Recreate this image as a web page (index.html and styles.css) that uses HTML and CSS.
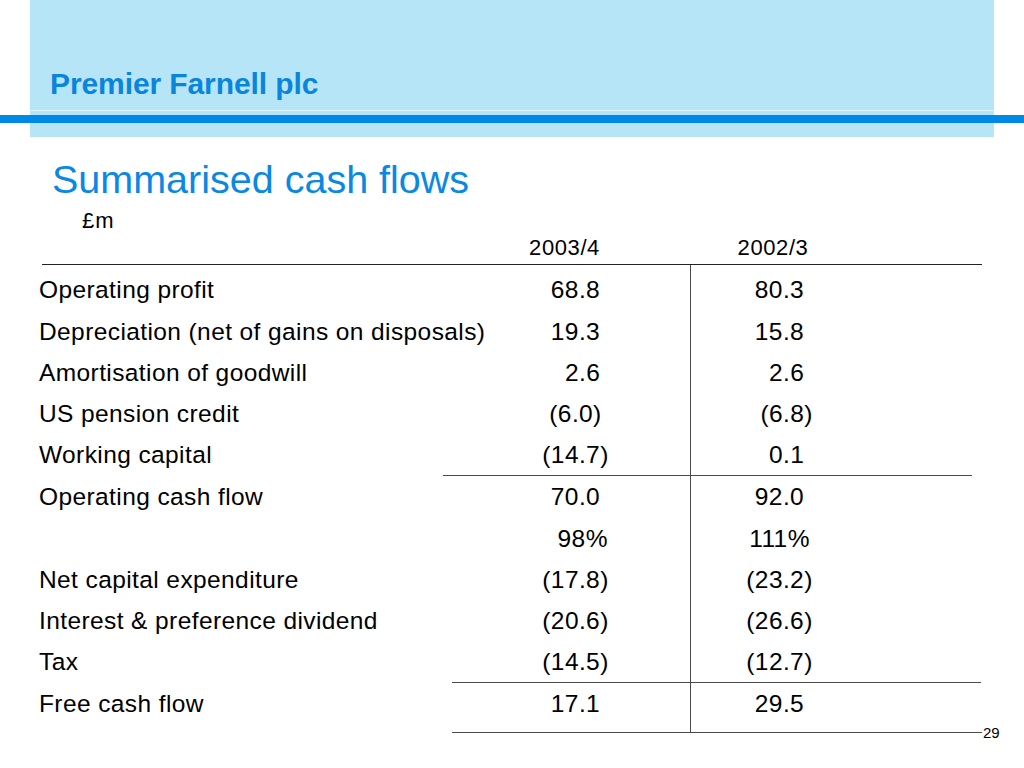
FILE: index.html
```html
<!DOCTYPE html>
<html lang="en">
<head>
<meta charset="utf-8">
<title>Summarised cash flows</title>
<link rel="stylesheet" href="styles.css">
</head>
<body>
<div class="page">
  <header class="header">
    <div class="banner-top">
      <div class="brand">Premier Farnell plc</div>
      <div class="sheen"></div>
    </div>
    <div class="bar"></div>
    <div class="banner-bottom"></div>
  </header>

  <h1 class="title">Summarised cash flows</h1>
  <div class="unit">£m</div>

  <div class="thead">
    <div></div>
    <div class="h1">2003/4</div>
    <div class="h2">2002/3</div>
  </div>

  <div class="tbody">
    <div class="row spacer-top"><div></div><div class="c1"></div><div></div></div>
    <div class="row"><div class="lbl">Operating profit</div><div class="c1">68.8</div><div class="c2">80.3</div></div>
    <div class="row"><div class="lbl">Depreciation (net of gains on disposals)</div><div class="c1">19.3</div><div class="c2">15.8</div></div>
    <div class="row"><div class="lbl">Amortisation of goodwill</div><div class="c1">  2.6</div><div class="c2">  2.6</div></div>
    <div class="row"><div class="lbl">US pension credit</div><div class="c1">(6.0)</div><div class="c2">  (6.8)</div></div>
    <div class="row"><div class="lbl">Working capital</div><div class="c1">(14.7)</div><div class="c2">  0.1</div></div>
    <div class="rule rule-a"></div>
    <div class="row"><div class="lbl">Operating cash flow</div><div class="c1">70.0</div><div class="c2">92.0</div></div>
    <div class="row"><div class="lbl"></div><div class="c1">  98%</div><div class="c2">111%</div></div>
    <div class="row"><div class="lbl">Net capital expenditure</div><div class="c1">(17.8)</div><div class="c2">(23.2)</div></div>
    <div class="row"><div class="lbl">Interest &amp; preference dividend</div><div class="c1">(20.6)</div><div class="c2">(26.6)</div></div>
    <div class="row"><div class="lbl">Tax</div><div class="c1">(14.5)</div><div class="c2">(12.7)</div></div>
    <div class="rule rule-b"></div>
    <div class="row"><div class="lbl">Free cash flow</div><div class="c1">17.1</div><div class="c2">29.5</div></div>
    <div class="row spacer-bottom"><div></div><div class="c1"></div><div></div></div>
    <div class="foot">
      <div class="rule-c"></div>
      <div class="pageno">29</div>
    </div>
  </div>
</div>
</body>
</html>
```

FILE: styles.css
```css
* { box-sizing: border-box; }

html, body {
  margin: 0;
  padding: 0;
  background: #ffffff;
}

.page {
  width: 1024px;
  height: 768px;
  overflow: hidden;
  font-family: "Liberation Sans", Arial, sans-serif;
  color: #000000;
}

/* Header banner */
.header {
  height: 137px;
}

.banner-top {
  margin-left: 30px;
  width: 964px;
  height: 115px;
  background: #b6e5f8;
  padding-top: 66px;
  display: flex;
  flex-direction: column;
}

.brand {
  height: 44px;
  padding-left: 20px;
  font-size: 30px;
  line-height: 36px;
  font-weight: bold;
  color: #0a85dc;
  letter-spacing: -0.1px;
  white-space: nowrap;
}

.sheen {
  height: 1px;
  background: #dbf3fc;
}

.bar {
  height: 8px;
  background: #0088e6;
}

.banner-bottom {
  margin-left: 30px;
  width: 964px;
  height: 14px;
  background: #b6e5f8;
}

/* Title */
.title {
  margin: 19px 0 0 52px;
  font-size: 39.5px;
  line-height: 46px;
  font-weight: normal;
  color: #0a88e2;
}

.unit {
  margin: 6px 0 0 82px;
  font-size: 22px;
  line-height: 25px;
  letter-spacing: 1px;
}

/* Table */
.thead {
  margin: 2px 0 0 42px;
  width: 940px;
  height: 30px;
  display: grid;
  grid-template-columns: 401px 248px 291px;
  font-size: 22px;
  line-height: 25px;
  letter-spacing: 0.6px;
  border-bottom: 1px solid #222222;
}

.h1 {
  text-align: center;
  padding-right: 5px;
}

.h2 {
  text-align: center;
  padding-right: 127px;
}

.tbody {
  font-size: 24.5px;
  letter-spacing: 0.4px;
}

.row {
  display: grid;
  grid-template-columns: 443px 248px 291px;
  width: 982px;
  height: 41.2px;
  line-height: 41.2px;
  white-space: pre;
}

.lbl {
  padding-left: 39px;
  white-space: nowrap;
}

.c1 {
  text-align: center;
  padding-left: 18px;
  border-right: 1px solid #4a4a4a;
}

.c2 {
  text-align: center;
  padding-right: 114px;
}

.spacer-top {
  height: 4.4px;
}

.spacer-bottom {
  height: 8px;
}

.rule {
  height: 0;
  border-top: 1px solid #4a4a4a;
}

.rule-a {
  margin-left: 443px;
  width: 529px;
}

.rule-b {
  margin-left: 452px;
  width: 529px;
}

.foot {
  display: flex;
  align-items: center;
  height: 1px;
}

.rule-c {
  margin-left: 452px;
  width: 530px;
  height: 1px;
  background: #4a4a4a;
}

.pageno {
  margin-left: 1px;
  margin-top: 1px;
  font-size: 15px;
  line-height: 16px;
  letter-spacing: 0;
}
```
